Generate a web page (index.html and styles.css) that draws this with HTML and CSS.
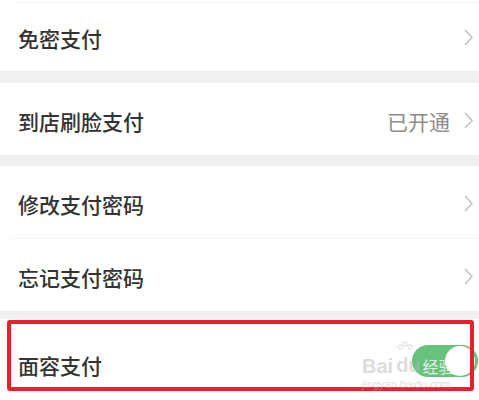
FILE: index.html
```html
<!DOCTYPE html>
<html lang="zh-CN">
<head>
    <meta charset="UTF-8">
    <meta name="viewport" content="width=device-width, initial-scale=1.0">
    <title>支付设置</title>
    <link rel="stylesheet" href="styles.css">
</head>
<body>
    <div class="page">
        <div class="group top">
            <div class="item">
                <span class="label">免密支付</span>
                <span class="arrow"><svg width="9" height="17" viewBox="0 0 9 17"><path d="M1 1 L8 8.5 L1 16" fill="none" stroke="#bdbdbd" stroke-width="1.4"/></svg></span>
            </div>
        </div>

        <div class="group">
            <div class="item">
                <span class="label">到店刷脸支付</span>
                <span class="value">已开通</span>
                <span class="arrow"><svg width="9" height="17" viewBox="0 0 9 17"><path d="M1 1 L8 8.5 L1 16" fill="none" stroke="#bdbdbd" stroke-width="1.4"/></svg></span>
            </div>
        </div>

        <div class="group">
            <div class="item">
                <span class="label">修改支付密码</span>
                <span class="arrow"><svg width="9" height="17" viewBox="0 0 9 17"><path d="M1 1 L8 8.5 L1 16" fill="none" stroke="#bdbdbd" stroke-width="1.4"/></svg></span>
            </div>
            <div class="item divided">
                <span class="label">忘记支付密码</span>
                <span class="arrow"><svg width="9" height="17" viewBox="0 0 9 17"><path d="M1 1 L8 8.5 L1 16" fill="none" stroke="#bdbdbd" stroke-width="1.4"/></svg></span>
            </div>
        </div>

        <div class="group last">
            <div class="item tall">
                <span class="label">面容支付</span>
                <span class="switch on"><span class="knob"></span></span>
            </div>
            <div class="highlight"></div>
            <div class="watermark">
                <div class="wm-line">
                    <span class="wm-logo">Bai</span>
                    <span class="wm-du">
                        <svg class="wm-paw" width="18" height="16" viewBox="0 0 18 16">
                            <circle cx="4" cy="6" r="2.2" fill="none" stroke="currentColor"/>
                            <circle cx="9" cy="3" r="2.2" fill="none" stroke="currentColor"/>
                            <circle cx="14" cy="6" r="2.2" fill="none" stroke="currentColor"/>
                        </svg>
                        <span class="wm-logo">du</span>
                    </span>
                    <span class="wm-cn">经验</span>
                </div>
                <span class="wm-url">jingyan.baidu.com</span>
            </div>
        </div>
    </div>
</body>
</html>
```

FILE: styles.css
```css
* {
    margin: 0;
    padding: 0;
    box-sizing: border-box;
}

body {
    font-family: "Noto Sans CJK SC", "Noto Sans", sans-serif;
    background-color: #f0f0f0;
    color: #333;
    overflow: hidden;
}

.page {
    width: 479px;
    height: 400px;
    overflow: hidden;
}

.group {
    background-color: white;
    margin-bottom: 11px;
}

.group.top {
    padding-top: 2px;
    margin-bottom: 12px;
}

.group.top .item {
    border-top: 1px solid #f2f2f2;
    margin-left: 17px;
    padding-left: 1px;
}

.group.last {
    position: relative;
    margin-bottom: 0;
    margin-top: -3px;
}

.item {
    display: flex;
    align-items: center;
    height: 72px;
    padding: 4px 6px 0 18px;
}

.group.top .item {
    height: 69px;
    padding-top: 2px;
}

.item.divided {
    border-top: 1px solid #f3f3f3;
    margin-left: 12px;
    padding-left: 6px;
    height: 73px;
}

.item.tall {
    height: 92px;
    padding-top: 0;
    padding-right: 2px;
}

.label {
    flex: 1;
    font-size: 21px;
    font-weight: 500;
    color: #333;
}

.value {
    font-size: 21px;
    color: #8c8c8c;
    margin-right: 14px;
}

.arrow {
    display: flex;
    align-items: center;
    margin-bottom: 2px;
}

.switch {
    position: relative;
    width: 66px;
    height: 32px;
    border-radius: 16px;
    background-color: #67c37b;
    margin-top: -8px;
    margin-right: -1px;
}

.switch .knob {
    position: absolute;
    right: 3px;
    top: 1px;
    width: 30px;
    height: 30px;
    border-radius: 50%;
    background-color: white;
}

.highlight {
    position: absolute;
    left: 7px;
    top: 1px;
    width: 467px;
    height: 71px;
    border: 4px solid #e81f2c;
    border-radius: 3px;
}

.watermark {
    position: absolute;
    left: 362px;
    top: 33px;
    color: rgba(185, 185, 185, 0.5);
    font-family: "Liberation Sans", sans-serif;
    white-space: nowrap;
    pointer-events: none;
}

.wm-line {
    display: flex;
    align-items: flex-end;
    height: 24px;
}

.wm-logo {
    font-size: 20px;
    font-weight: bold;
    line-height: 1;
}

.wm-du {
    position: relative;
    margin-left: 3px;
}

.wm-paw {
    position: absolute;
    left: 0;
    top: -14px;
}

.wm-cn {
    font-family: "Noto Sans CJK SC", sans-serif;
    font-size: 16px;
    line-height: 1;
    color: rgba(255, 255, 255, 0.8);
    margin-left: 2px;
    margin-bottom: 2px;
}

.wm-url {
    display: block;
    font-size: 11px;
    line-height: 1;
    margin-top: 3px;
}
```
